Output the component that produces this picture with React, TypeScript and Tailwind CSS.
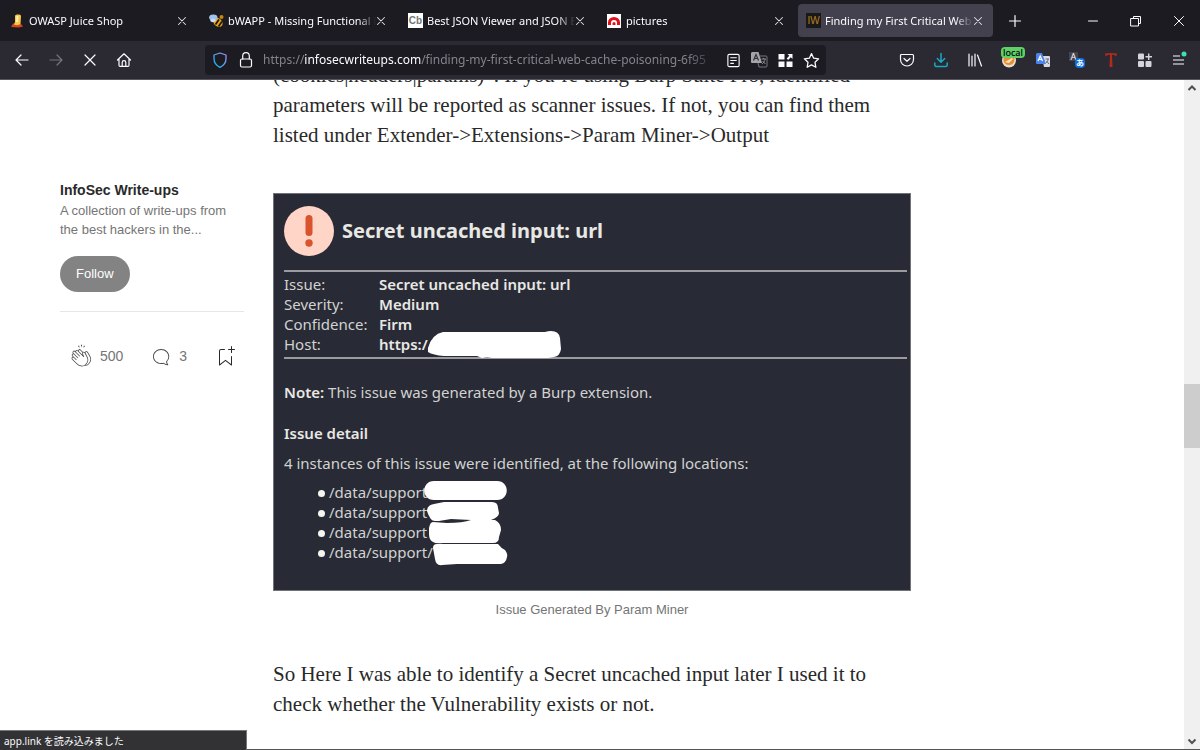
import type { ReactNode } from 'react';

const UI = "font-['Noto_Sans','Noto_Sans_CJK_JP',sans-serif]";

function Stroke({ children, size = 16 }: { children: ReactNode; size?: number }) {
  return (
    <svg width={size} height={size} viewBox="0 0 16 16" fill="none" stroke="currentColor" strokeWidth="1.2" strokeLinecap="round" strokeLinejoin="round" className="shrink-0" aria-hidden="true">
      {children}
    </svg>
  );
}

function JuiceIcon() {
  return (
    <svg width="14" height="14" viewBox="0 0 14 14" aria-hidden="true">
      <path d="M1 13 3 9.500l8 .5 2 2.500-4 1z" fill="#d9451c" />
      <path d="M5 2Q5 .5 7 .5h2Q11 .5 11 2l-.5 8Q8 12 4 10.500L5 8z" fill="#f7c948" />
      <path d="M6.500 2h2l-.5 6h-2z" fill="#fff0b0" />
    </svg>
  );
}

function BeeIcon() {
  return (
    <svg width="15" height="14" viewBox="0 0 15 14" aria-hidden="true">
      <ellipse cx="9" cy="8.500" rx="5" ry="4" transform="rotate(40 9 8.500)" fill="#e5a512" />
      <path d="m6.500 10.500 3.500-5M9.500 12.500l3.500-5" stroke="#161310" strokeWidth="1.600" />
      <circle cx="12.500" cy="3" r="2" fill="#c7860d" />
      <ellipse cx="4.300" cy="3.500" rx="4.200" ry="2.900" fill="#9fc3ef" />
      <ellipse cx="4" cy="6.500" rx="2.800" ry="1.800" fill="#c9ddf5" />
    </svg>
  );
}

function CbIcon() {
  return <span className="flex size-[15px] items-center justify-center bg-white font-['Liberation_Sans',sans-serif] text-[10px] font-bold leading-none text-[#777]">Cb</span>;
}

function ArcIcon() {
  return (
    <svg width="14" height="14" viewBox="0 0 14 14" aria-hidden="true">
      <path d="M0 0h14v14H0z" fill="#fff" />
      <path d="M1 11V8.500a6 5.500 0 0 1 12 0V11h-3V9a3 3 0 0 0-6 0v2z" fill="#e3101b" />
      <path d="M5.500 11V9.500a1.500 1.500 0 0 1 3 0V11z" fill="#e3101b" />
    </svg>
  );
}

function IwIcon() {
  return <span className="flex size-[15px] items-center justify-center bg-[#191919] font-['Liberation_Sans',sans-serif] text-[10px] leading-none text-[#b9801f]">IW</span>;
}

const tabs = [
  { title: 'OWASP Juice Shop', icon: <JuiceIcon />, active: false },
  { title: 'bWAPP - Missing Functional L', icon: <BeeIcon />, active: false },
  { title: 'Best JSON Viewer and JSON E', icon: <CbIcon />, active: false },
  { title: 'pictures', icon: <ArcIcon />, active: false },
  { title: 'Finding my First Critical Web C', icon: <IwIcon />, active: true },
];

function Tab({ title, icon, active }: { title: string; icon: ReactNode; active: boolean }) {
  return (
    <div className="min-w-0 max-w-[199px] flex-1 px-0.5 py-1">
      <div className={active ? 'flex h-[33px] items-center rounded bg-[#42414d] pl-2 pr-2' : 'flex h-[33px] items-center rounded pl-2 pr-2'}>
        <span className="w-[19px] shrink-0">{icon}</span>
        <span className="min-w-0 flex-1 overflow-hidden whitespace-nowrap pt-0.5 text-[11px] text-[#fbfbfe] [mask-image:linear-gradient(to_right,black_88%,transparent)]">{title}</span>
        <button aria-label={`Close ${title}`} className="flex w-3 shrink-0 justify-end text-[#e0e0e6]">
          <Stroke size={14}><path d="m4 4 8 8M12 4l-8 8" /></Stroke>
        </button>
      </div>
    </div>
  );
}

function ToolButton({ label, children, dim }: { label: string; children: ReactNode; dim?: boolean }) {
  return (
    <button aria-label={label} className={dim ? 'flex h-8 w-[34px] items-center justify-center text-[#75747d]' : 'flex h-8 w-[34px] items-center justify-center text-[#fbfbfe]'}>
      {children}
    </button>
  );
}

function BrowserHeader() {
  return (
    <header className={`shrink-0 ${UI}`}>
      <div className="flex h-[41px] bg-[#1c1b22] text-[#fbfbfe]">
        <div className="flex min-w-0 flex-1">
          {tabs.map((t) => <Tab key={t.title} {...t} />)}
          <button aria-label="New tab" className="flex w-10 items-center justify-center">
            <Stroke><path d="M8 2.500v11M2.500 8h11" /></Stroke>
          </button>
        </div>
        <div className="flex">
          <button aria-label="Minimize" className="flex w-[43px] items-center justify-center"><Stroke><path d="M3.500 8h9" strokeWidth="1" /></Stroke></button>
          <button aria-label="Restore" className="flex w-[43px] items-center justify-center"><Stroke><path d="M3 5.500h7.500v7.500H3zM5.500 5.500V3.500h7v7h-2" strokeWidth="1" /></Stroke></button>
          <button aria-label="Close window" className="flex w-[43px] items-center justify-center"><Stroke><path d="m3.500 3.500 9 9M12.500 3.500l-9 9" strokeWidth="1" /></Stroke></button>
        </div>
      </div>
      <div className="flex h-[39px] items-center border-b border-[#57565e] bg-[#2b2a33] pl-[5px] pr-1">
        <nav className="flex">
          <ToolButton label="Back"><Stroke><path d="M14 8H2M7 3 2 8l5 5" /></Stroke></ToolButton>
          <ToolButton label="Forward" dim><Stroke><path d="M2 8h12M9 3l5 5-5 5" /></Stroke></ToolButton>
          <ToolButton label="Stop"><Stroke><path d="m3 3 10 10M13 3 3 13" /></Stroke></ToolButton>
          <ToolButton label="Home"><Stroke><path d="M1.500 8 8 1.800 14.500 8M3 7v6.200c0 .7.400 1.100 1.100 1.100h7.800c.7 0 1.100-.4 1.100-1.100V7M6.200 14V10.500a1.800 1.800 0 0 1 3.600 0V14" /></Stroke></ToolButton>
        </nav>
        <div className="mx-16 flex h-[30px] min-w-0 flex-1 items-center rounded bg-[#1c1b22] pl-[7px] pr-0.5 text-[#fbfbfe]">
          <svg width="16" height="16" viewBox="0 0 16 16" fill="none" className="shrink-0" aria-hidden="true">
            <defs>
              <linearGradient id="shield" x1="0" y1="1" x2="1" y2="0"><stop stopColor="#00b8f5" /><stop offset="1" stopColor="#a790f5" /></linearGradient>
            </defs>
            <path d="M8 1 14 3v3.500c0 4-2 7-6 8.800-4-1.800-6-4.800-6-8.800V3z" stroke="url(#shield)" strokeWidth="1.300" strokeLinejoin="round" />
          </svg>
          <span className="ml-[10px]"><Stroke><rect x="2.500" y="7" width="11" height="8" rx="1.500" /><path d="M4.700 7V4a3.300 3.300 0 0 1 6.600 0v3" /></Stroke></span>
          <span className="ml-[9px] mr-0.5 min-w-0 flex-1 overflow-hidden whitespace-nowrap text-[12px] text-[#84838c] [mask-image:linear-gradient(to_right,black_93%,transparent)]">
            https://<span className="text-[#fbfbfe]">infosecwriteups.com</span>/finding-my-first-critical-web-cache-poisoning-6f95
          </span>
          <button aria-label="Reader view" className="flex w-[26px] justify-center"><Stroke size={15}><rect x="2" y="1.500" width="12" height="13" rx="1.500" /><path d="M5 5h6M5 8h6M5 11h3" /></Stroke></button>
          <button aria-label="Translate" className="flex w-[26px] justify-center">
            <svg width="17" height="16" viewBox="0 0 17 16" aria-hidden="true">
              <path d="M1 0h6.500L11 11H1a1 1 0 0 1-1-1V1z" fill="#a5a4aa" />
              <path d="M9 4h6a1 1 0 0 1 1 1v9a1 1 0 0 1-1 1H8l-1-4" fill="none" stroke="#77767e" />
              <path d="M2.500 8.500 5 2.500l2.500 6M3.300 6.500h3.400" fill="none" stroke="#33323a" strokeWidth="1.200" />
              <path d="M10.500 7H15M12.500 6v1M14 7c0 2-1.500 4-3 5M11.500 9l3 3" fill="none" stroke="#8e8d95" />
            </svg>
          </button>
          <button aria-label="Sidebar apps" className="flex w-[26px] justify-center">
            <svg width="15" height="15" viewBox="0 0 15 15" fill="currentColor" aria-hidden="true"><path d="M.5 1h6v5.500h-6zM.5 8.500h6V14h-6zM8.500 8.500h6V14h-6z" /><path d="M9.500 1h5v5l-1.700-1.700-2.600 2.600-1.500-1.500 2.600-2.600z" /></svg>
          </button>
          <button aria-label="Bookmark page" className="flex w-[26px] justify-center"><Stroke size={17}><path d="m8 1.500 2 4.300 4.700.6-3.400 3.300.8 4.700L8 12.100l-4.100 2.300.8-4.700L1.300 6.400 6 5.800z" /></Stroke></button>
        </div>
        <div className="flex">
          <ToolButton label="Save to Pocket"><Stroke><path d="M2.500 2.500h11c.6 0 1 .4 1 1V7.500a6.500 6.500 0 0 1-13 0v-4c0-.6.400-1 1-1zM5 6.500l3 2.800 3-2.800" /></Stroke></ToolButton>
          <ToolButton label="Downloads"><span className="text-[#18a9c4]"><Stroke><path d="M8 1.500v8.500M4.300 6.500 8 10.200l3.700-3.700M1.800 11v2c0 1 .5 1.500 1.500 1.500h9.400c1 0 1.500-.5 1.500-1.500v-2" strokeWidth="1.500" /></Stroke></span></ToolButton>
          <ToolButton label="Library"><Stroke><path d="M2 2v12M5 4v10M8 2v12M10.500 3 14.500 14" /></Stroke></ToolButton>
          <div className="relative">
            <ToolButton label="Cookie profile">
              <svg width="16" height="16" viewBox="0 0 16 16" aria-hidden="true"><circle cx="8" cy="8.500" r="7" fill="#e9dcc8" /><circle cx="8" cy="7.500" r="5.500" fill="#e88d35" /><path d="m4 10 7-4 1 1-4 4z" fill="#ffe3b8" /></svg>
            </ToolButton>
            <span className="absolute left-[9px] top-[3px] h-[11px] rounded-sm bg-[#5fd068] px-0.5 text-[9px] font-medium leading-[11px] text-black">local</span>
          </div>
          <ToolButton label="Translate selection">
            <svg width="16" height="16" viewBox="0 0 16 16" aria-hidden="true"><path d="M7 4h7a1 1 0 0 1 1 1v9a1 1 0 0 1-1 1H9z" fill="#d9dbe2" /><path d="M2 1h5l4 11H2a1 1 0 0 1-1-1V2z" fill="#4b83ea" /><path d="m3 9 2.200-5L7.500 9M3.800 7.500h3" fill="none" stroke="#fff" strokeWidth="1.200" /><path d="M10.500 7H14M13 7c0 2-1 3-2 4M11.500 9l2.500 3" fill="none" stroke="#5f6b85" /></svg>
          </ToolButton>
          <ToolButton label="Japanese translator">
            <span className="relative block size-4">
              <span className="absolute left-0 top-0 size-[9px] bg-[#45444c] text-center text-[9px] leading-[9px]">A</span>
              <span className="absolute bottom-0 right-0 size-[10px] rounded-sm bg-[#0870e8] text-center text-[8px] font-bold leading-[10px]">あ</span>
            </span>
          </ToolButton>
          <ToolButton label="Text tool">
            <svg width="16" height="16" viewBox="0 0 16 16" aria-hidden="true"><path d="M2 1.500Q8 .5 14 1.500l-.5 3Q12 2.600 9 2.700L9.500 15h-3L7 2.700Q4 2.600 2.500 4.500z" fill="#b02a1e" /></svg>
          </ToolButton>
          <ToolButton label="Extensions">
            <svg width="16" height="16" viewBox="0 0 16 16" fill="#d5d4da" aria-hidden="true"><rect x="1" y="1.500" width="6" height="6" rx="1" /><rect x="1" y="9" width="6" height="6" rx="1" /><rect x="8.500" y="9" width="6" height="6" rx="1" /><path d="M11 1.500h1.400V4H15v1.400h-2.600V8H11V5.400H8.500V4H11z" /></svg>
          </ToolButton>
          <ToolButton label="Menu">
            <svg width="18" height="18" viewBox="0 0 18 18" fill="none" aria-hidden="true"><path d="M3 5h7M3 9h11M3 13h11" stroke="#fbfbfe" strokeWidth="1.200" /><circle cx="14" cy="3" r="2.500" fill="#3fe1b0" /></svg>
          </ToolButton>
        </div>
      </div>
    </header>
  );
}

function Sidebar() {
  return (
    <aside className="pl-[60px] pr-[29px] pt-[100px] font-['Liberation_Sans',sans-serif] text-[13px] text-[#757575]">
      <h2 className="text-[14px] font-bold leading-5 text-[#292929]">InfoSec Write-ups</h2>
      <p className="mt-px whitespace-nowrap leading-[19px]">A collection of write-ups from<br />the best hackers in the...</p>
      <button className="mt-[17px] h-9 rounded-full bg-[#838383] px-4 text-[13px] text-white">Follow</button>
      <div className="mt-[19px] flex items-center border-t border-[#e6e6e6] pt-8">
        <button className="flex items-center gap-1.5 pl-[9px]" aria-label="500 claps">
          <svg width="25" height="25" viewBox="0 0 24 24" fill="#4a4a4a" aria-hidden="true"><path fillRule="evenodd" clipRule="evenodd" d="M11.37.83L12 3.28l.63-2.45h-1.26zM13.92 3.95l1.52-2.1-1.18-.4-.34 2.5zM8.59 1.84l1.52 2.11-.34-2.5-1.18.4zM18.52 18.92a4.23 4.23 0 0 1-2.62 1.33l.41-.37c2.39-2.4 2.86-4.95 1.4-7.63l-.91-1.6-.8-1.67c-.25-.56-.19-.98.21-1.29a.7.7 0 0 1 .55-.13c.28.05.54.23.72.5l2.37 4.16c.97 1.62 1.14 4.23-1.33 6.7zm-11-.44l-4.15-4.15a.83.83 0 0 1 1.17-1.17l2.16 2.16a.37.37 0 0 0 .51-.52l-2.15-2.16L3.6 11.2a.83.83 0 0 1 1.17-1.17l3.43 3.44a.36.36 0 0 0 .52 0 .36.36 0 0 0 0-.52L5.29 9.51l-.97-.97a.83.83 0 0 1 0-1.16.84.84 0 0 1 1.17 0l.97.97 3.44 3.43a.36.36 0 0 0 .51 0 .37.37 0 0 0 0-.52L6.98 7.83a.82.82 0 0 1-.18-.9.82.82 0 0 1 .76-.51c.22 0 .43.09.58.24l5.8 5.79a.37.37 0 0 0 .58-.42L13.4 9.67c-.26-.56-.2-.98.2-1.29a.7.7 0 0 1 .55-.13c.28.05.55.23.73.5l2.2 3.86c1.3 2.38.87 4.59-1.29 6.75a4.65 4.65 0 0 1-4.19 1.37 7.73 7.73 0 0 1-4.07-2.25zm3.23-12.5l2.12 2.11c-.41.5-.47 1.17-.13 1.9l.22.46-3.52-3.53a.81.81 0 0 1-.1-.36c0-.23.09-.43.24-.59a.85.85 0 0 1 1.17 0zm7.36 1.7a1.86 1.86 0 0 0-1.23-.84 1.44 1.44 0 0 0-1.12.27c-.3.24-.5.55-.58.89-.25-.25-.57-.4-.91-.47-.28-.04-.56 0-.82.1l-2.18-2.18a1.56 1.56 0 0 0-2.2 0c-.2.2-.33.44-.4.7a1.56 1.56 0 0 0-2.63.75 1.6 1.6 0 0 0-2.23-.04 1.56 1.56 0 0 0 0 2.2c-.24.1-.5.24-.72.45a1.56 1.56 0 0 0 0 2.2l.52.52a1.56 1.56 0 0 0-.75 2.61L7 19a8.46 8.46 0 0 0 4.48 2.45 5.18 5.18 0 0 0 3.36-.5 4.89 4.89 0 0 0 4.2-1.51c2.75-2.77 2.54-5.74 1.43-7.59L18.1 7.68z" /></svg>
          <span className="text-[14px]">500</span>
        </button>
        <button className="ml-[26px] flex items-center gap-1.5" aria-label="3 responses">
          <svg width="24" height="24" viewBox="0 0 24 24" fill="#4a4a4a" aria-hidden="true"><path d="M18 16.8a7.14 7.14 0 0 0 2.24-5.32c0-4.12-3.53-7.48-8.05-7.48C7.67 4 4 7.36 4 11.48c0 4.13 3.67 7.48 8.2 7.48a8.9 8.9 0 0 0 2.38-.32c.23.2.48.39.75.56 1.06.69 2.2 1.04 3.4 1.04.22 0 .4-.11.48-.29a.5.5 0 0 0-.04-.52 6.4 6.4 0 0 1-1.16-2.65v.02zm-3.12 1.06l-.06-.22-.32.1a8 8 0 0 1-2.3.33c-4.03 0-7.3-2.96-7.3-6.59S8.17 4.9 12.2 4.9c4 0 7.1 2.96 7.1 6.6 0 1.8-.6 3.47-2.02 4.72l-.2.16v.26l.02.3a6.74 6.74 0 0 0 .88 2.4 5.27 5.27 0 0 1-2.17-.86c-.28-.17-.72-.38-.94-.59l.01-.02z" /></svg>
          <span className="text-[14px]">3</span>
        </button>
        <button className="ml-auto mr-1.5" aria-label="Save story">
          <svg width="25" height="25" viewBox="0 0 25 25" fill="#292929" aria-hidden="true"><path d="M18 2.500a.5.5 0 0 1 1 0V5h2.500a.5.5 0 0 1 0 1H19v2.500a.5.5 0 1 1-1 0V6h-2.500a.5.5 0 0 1 0-1H18V2.500zM7 7a1 1 0 0 1 1-1h3.500a.5.5 0 0 0 0-1H8a2 2 0 0 0-2 2v14a.5.5 0 0 0 .8.4l5.700-4.400 5.700 4.400a.5.5 0 0 0 .8-.4v-8.500a.5.5 0 0 0-1 0v7.480l-5.200-4a.5.5 0 0 0-.6 0l-5.200 4V7z" /></svg>
        </button>
      </div>
    </aside>
  );
}

const facts = [
  ['Issue:', 'Secret uncached input: url'],
  ['Severity:', 'Medium'],
  ['Confidence:', 'Firm'],
  ['Host:', 'https://'],
];

const paths = ['/data/support', '/data/support', '/data/support', '/data/support/'];

function IssueReport() {
  return (
    <div className="relative h-[398px] border border-[#71727a] bg-[#282a36] pl-[10px] pr-[3px] pt-3 font-['Noto_Sans',sans-serif] text-[15px] leading-5 text-[#d2d2cf]">
      <div className="flex items-center gap-2">
        <svg width="50" height="50" viewBox="0 0 50 50" aria-hidden="true" className="shrink-0">
          <circle cx="25" cy="25" r="25" fill="#ffd5c7" />
          <rect x="21.500" y="9" width="7" height="21" rx="3.500" fill="#d9532c" />
          <circle cx="25" cy="37" r="3.700" fill="#d9532c" />
        </svg>
        <h3 className="text-[20px] font-bold leading-8 text-[#e8e8e3]">Secret uncached input: url</h3>
      </div>
      <div className="mt-[14px] border-y-2 border-[#9b9b9d] pb-[3px] pt-0.5">
        <table className="border-collapse text-left">
          <tbody>
            {facts.map(([k, v]) => (
              <tr key={k}>
                <th className="w-[95px] p-0 font-normal">{k}</th>
                <td className="p-0 font-semibold text-[#e8e8e3]">{v}</td>
              </tr>
            ))}
          </tbody>
        </table>
      </div>
      <p className="mt-[23px]"><b className="font-semibold text-[#e8e8e3]">Note:</b> This issue was generated by a Burp extension.</p>
      <h4 className="mt-[21px] font-semibold text-[#e8e8e3]">Issue detail</h4>
      <p className="mt-[10px]">4 instances of this issue were identified, at the following locations:</p>
      <ul className="mt-[9px] pl-[34px]">
        {paths.map((p, i) => (
          <li key={i} className="flex items-center gap-1"><span className="mt-[3px] size-[7px] rounded-full bg-[#f5f5ef]" />{p}</li>
        ))}
      </ul>
      <svg className="absolute -left-px -top-px" width="638" height="398" viewBox="0 0 638 398" fill="#fff" aria-hidden="true">
        <path d="M155 155Q159 141 170 139H272Q275 138 278 138Q286 138 287 145L288 156Q287 163 281 164L275 165H219L214 164L209 165L204 163H171Q160 162 155 159z" />
        <path d="M161 288h63c13 0 13 19 0 19h-63c-13 0-13-19 0-19z" />
        <path d="M154 318q0-6 7-7l10-2h48q6 0 6 6l1 5q0 4-8 7h-20l-20-1-12 2h-4q-5 0-8-10z" />
        <path d="M160 329l14 1q16 0 24-3h24q6 3 6 10l-2 7q0 6-6 6h-50q-7 1-10-1-4-2-4-8v-6q1-6 4-6z" />
        <path d="M164 351h61q3 4 7 6 3 4 2 7-1 6-6 7h-44l-15 1q-6 1-7-6l-2-11q0-4 4-4z" />
      </svg>
    </div>
  );
}

export default function App() {
  return (
    <div className="relative flex h-screen flex-col overflow-hidden bg-white">
      <BrowserHeader />
      <div className="flex min-h-0 flex-1 border-b border-[#555]">
        <main className="grid min-w-0 flex-1 grid-cols-[1fr_638px_1fr] overflow-hidden">
          <Sidebar />
          <article className="-mt-5 font-['Liberation_Serif',serif] text-[21px] leading-[30px] text-[#292929]">
            <p className="whitespace-nowrap">
              (cookies|headers|params)”. If you’re using Burp Suite Pro, identified<br />
              parameters will be reported as scanner issues. If not, you can find them<br />
              listed under Extender-&gt;Extensions-&gt;Param Miner-&gt;Output
            </p>
            <figure className="mt-[43px]">
              <IssueReport />
              <figcaption className="mt-[9px] text-center font-['Liberation_Sans',sans-serif] text-[13px] leading-5 text-[#757575]">Issue Generated By Param Miner</figcaption>
            </figure>
            <p className="mt-[39px] whitespace-nowrap">
              So Here I was able to identify a Secret uncached input later I used it to<br />
              check whether the Vulnerability exists or not.
            </p>
          </article>
        </main>
        <div className="flex w-4 shrink-0 flex-col items-center bg-[#f0f0f0] text-[#505050]">
          <svg width="16" height="16" viewBox="0 0 16 16" fill="none" stroke="currentColor" strokeWidth="2" aria-hidden="true"><path d="m4.500 10 3.500-3.500L11.500 10" /></svg>
          <div className="h-[288px]" />
          <div className="h-16 w-full bg-[#cdcdcd]" />
          <svg className="mt-auto" width="16" height="16" viewBox="0 0 16 16" fill="none" stroke="currentColor" strokeWidth="2" aria-hidden="true"><path d="m4.500 6.500 3.500 3.500 3.500-3.500" /></svg>
        </div>
      </div>
      <div className={`absolute bottom-0 left-0 h-5 w-[247px] border-r border-t border-[#77777a] bg-[#323234] px-1 text-[10px] leading-5 text-[#fbfbfe] ${UI}`}>app.link を読み込みました</div>
    </div>
  );
}
